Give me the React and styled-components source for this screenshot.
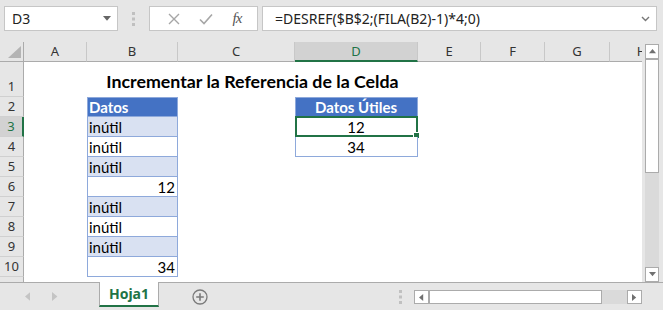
import React from 'react'
import styled, { createGlobalStyle } from 'styled-components'

const GlobalStyle = createGlobalStyle`
  html, body { margin: 0; padding: 0; background: #e6e6e6; }
  * { box-sizing: border-box; }
`

const COLS = [
  { id: 'A', w: 63 },
  { id: 'B', w: 91 },
  { id: 'C', w: 117 },
  { id: 'D', w: 123 },
  { id: 'E', w: 63 },
  { id: 'F', w: 64 },
  { id: 'G', w: 65 },
  { id: 'H', w: 64 },
]
// row 11 is only a sliver at the bottom edge
const ROWS = [35, 20, 20, 20, 20, 20, 20, 20, 20, 20, 20]

const CELLS = [
  { col: 'B', row: 2, kind: 'head', text: 'Datos', align: 'left' },
  { col: 'B', row: 3, kind: 'band', text: 'inútil', align: 'left' },
  { col: 'B', row: 4, kind: 'plain', text: 'inútil', align: 'left' },
  { col: 'B', row: 5, kind: 'band', text: 'inútil', align: 'left' },
  { col: 'B', row: 6, kind: 'plain', text: '12', align: 'right' },
  { col: 'B', row: 7, kind: 'band', text: 'inútil', align: 'left' },
  { col: 'B', row: 8, kind: 'plain', text: 'inútil', align: 'left' },
  { col: 'B', row: 9, kind: 'band', text: 'inútil', align: 'left' },
  { col: 'B', row: 10, kind: 'plain', text: '34', align: 'right' },
  { col: 'D', row: 2, kind: 'head', text: 'Datos Útiles', align: 'center' },
  { col: 'D', row: 3, kind: 'plain', text: '12', align: 'center', selected: true },
  { col: 'D', row: 4, kind: 'plain', text: '34', align: 'center' },
]

const colIndex = (id) => COLS.findIndex((c) => c.id === id) + 2

const Window = styled.div`
  width: 663px;
  height: 310px;
  background: #e6e6e6;
  display: flex;
  flex-direction: column;
  overflow: hidden;
  font-family: 'Noto Sans', 'Open Sans', sans-serif;
`

const FormulaBar = styled.div`
  height: 42px;
  flex-shrink: 0;
  display: flex;
  align-items: flex-start;
  padding: 6px 6px 0 4px;
`

const Box = styled.div`
  height: 25px;
  background: #fff;
  border: 1px solid #c6c6c6;
  display: flex;
  align-items: center;
`

const NameBox = styled(Box)`
  width: 114px;
  justify-content: space-between;
  padding: 0 6px 0 7px;
  font-size: 14px;
  color: #222;
`

const Grip = styled.div`
  width: 31px;
  height: 25px;
  display: flex;
  align-items: center;
  justify-content: center;
`

const FxBox = styled(Box)`
  width: 109px;
  justify-content: space-around;
  padding: 0 6px 0 8px;
`

const FxLabel = styled.span`
  font-family: 'Liberation Serif', serif;
  font-style: italic;
  font-size: 15px;
  color: #555;
  letter-spacing: -1px;
`

const FormulaInput = styled(Box)`
  flex: 1;
  margin-left: 4px;
  justify-content: space-between;
  padding: 0 6px 0 12px;
  font-size: 14px;
  color: #222;
`

const SheetArea = styled.div`
  height: 240px;
  flex-shrink: 0;
  display: flex;
`

const Grid = styled.div`
  width: 642px;
  height: 240px;
  background: #fff;
  display: grid;
  grid-template-columns: 24px ${COLS.map((c) => c.w + 'px').join(' ')};
  grid-template-rows: 20px ${ROWS.map((h) => h + 'px').join(' ')};
  overflow: hidden;
  font-family: Lato, 'Noto Sans', sans-serif;
`

const Corner = styled.div`
  grid-column: 1;
  grid-row: 1;
  background: #e6e6e6;
  border-right: 1px solid #ababab;
  border-bottom: 1px solid #ababab;
  display: flex;
  align-items: flex-end;
  justify-content: flex-end;
  padding: 0 2px 3px 0;
`

const ColHead = styled.div`
  grid-row: 1;
  grid-column: ${(p) => p.$col};
  background: ${(p) => (p.$active ? '#d2d2d2' : '#e6e6e6')};
  border-right: 1px solid #c8c8c8;
  border-bottom: ${(p) => (p.$active ? '2px solid #217346' : '1px solid #ababab')};
  display: flex;
  align-items: center;
  justify-content: center;
  font-family: 'Noto Sans', sans-serif;
  font-size: 13px;
  color: ${(p) => (p.$active ? '#217346' : '#333')};
  padding-bottom: 1px;
`

const RowHead = styled.div`
  grid-column: 1;
  grid-row: ${(p) => p.$row};
  background: ${(p) => (p.$active ? '#d2d2d2' : '#e6e6e6')};
  border-right: ${(p) => (p.$active ? '2px solid #217346' : '1px solid #ababab')};
  border-bottom: 1px solid #d0d0d0;
  display: flex;
  align-items: flex-end;
  justify-content: center;
  padding-bottom: 1px;
  font-family: 'Noto Sans', sans-serif;
  font-size: 13px;
  color: ${(p) => (p.$active ? '#217346' : '#333')};
`

const Title = styled.div`
  grid-row: 2;
  grid-column: 3 / 6;
  display: flex;
  align-items: flex-end;
  justify-content: center;
  padding: 0 0 5px 0;
  font-size: 17.8px;
  font-weight: 700;
  color: #000;
  white-space: nowrap;
`

const KIND_BG = { head: '#4472c4', band: '#d9e1f2', plain: '#ffffff' }

const TableCell = styled.div`
  position: relative;
  grid-column: ${(p) => p.$col};
  grid-row: ${(p) => p.$row};
  background: ${(p) => KIND_BG[p.$kind]};
  border-left: 1px solid #8ea9db;
  border-right: 1px solid #8ea9db;
  border-top: ${(p) => (p.$kind === 'head' ? '1px solid #8ea9db' : 'none')};
  border-bottom: 1px solid #8ea9db;
  display: flex;
  align-items: center;
  justify-content: ${(p) =>
    p.$align === 'right' ? 'flex-end' : p.$align === 'center' ? 'center' : 'flex-start'};
  padding: 0 2px 0 1px;
  font-size: 15px;
  font-weight: ${(p) => (p.$kind === 'head' ? 700 : 400)};
  color: ${(p) => (p.$kind === 'head' ? '#fff' : '#000')};
  white-space: nowrap;
`

const Selection = styled.div`
  position: absolute;
  top: -1px;
  left: -1px;
  right: -1px;
  bottom: -1px;
  border: 2px solid #217346;
  pointer-events: none;
`

const Handle = styled.div`
  position: absolute;
  right: -4px;
  bottom: -4px;
  width: 7px;
  height: 7px;
  background: #217346;
  border: 1px solid #fff;
`

const VScroll = styled.div`
  width: 14px;
  margin: 2px 0 0 3px;
  display: flex;
  flex-direction: column;
  background: #dadada;
`

const ScrollBtn = styled.div`
  width: ${(p) => (p.$horizontal ? '15px' : '14px')};
  height: ${(p) => (p.$horizontal ? '14px' : '15px')};
  flex-shrink: 0;
  background: #fff;
  border: 1px solid #ababab;
  display: flex;
  align-items: center;
  justify-content: center;
`

const Thumb = styled.div`
  background: #fff;
  border: 1px solid #ababab;
  flex-shrink: 0;
  width: ${(p) => p.$w || 'auto'};
  height: ${(p) => p.$h || 'auto'};
`

const Track = styled.div`
  flex: 1;
`

const TabBar = styled.div`
  flex: 1;
  display: flex;
  align-items: stretch;
  border-top: 1px solid #ababab;
`

const NavArrows = styled.div`
  width: 99px;
  display: flex;
  align-items: center;
  gap: 22px;
  padding-left: 25px;
`

const Tab = styled.div`
  width: 60px;
  margin-top: -1px;
  background: #fff;
  border-left: 1px solid #ababab;
  border-right: 1px solid #ababab;
  border-bottom: 2px solid #217346;
  margin-bottom: 3px;
  display: flex;
  align-items: center;
  justify-content: center;
  font-family: 'Noto Sans', sans-serif;
  font-weight: 700;
  font-size: 14px;
  color: #217346;
`

const AddSheet = styled.div`
  width: 84px;
  display: flex;
  align-items: center;
  padding-left: 33px;
`

const TabSpacer = styled.div`
  flex: 1;
  display: flex;
  align-items: center;
  justify-content: flex-end;
  padding-right: 12px;
`

const HScroll = styled.div`
  width: 228px;
  height: 14px;
  margin: 7px 21px 0 0;
  display: flex;
  background: #dadada;
`

const VDots = () => (
  <svg width="3" height="14" viewBox="0 0 3 14">
    <rect x="0" y="0" width="3" height="3" fill="#c0c0c0" />
    <rect x="0" y="5.5" width="3" height="3" fill="#c0c0c0" />
    <rect x="0" y="11" width="3" height="3" fill="#c0c0c0" />
  </svg>
)

const Triangle = ({ dir, size = 7, color = '#707070' }) => {
  const pts = {
    up: `0,${size * 0.6} ${size},${size * 0.6} ${size / 2},0`,
    down: `0,0 ${size},0 ${size / 2},${size * 0.6}`,
    left: `${size * 0.6},0 ${size * 0.6},${size} 0,${size / 2}`,
    right: `0,0 0,${size} ${size * 0.6},${size / 2}`,
  }[dir]
  const vertical = dir === 'up' || dir === 'down'
  return (
    <svg width={vertical ? size : size * 0.6} height={vertical ? size * 0.6 : size}>
      <polygon points={pts} fill={color} />
    </svg>
  )
}

export default function App() {
  return (
    <Window>
      <GlobalStyle />
      <FormulaBar>
        <NameBox>
          <span>D3</span>
          <Triangle dir="down" size={8} color="#666" />
        </NameBox>
        <Grip>
          <VDots />
        </Grip>
        <FxBox>
          <svg width="12" height="12" viewBox="0 0 12 12">
            <path d="M1 1 L11 11 M11 1 L1 11" stroke="#a6a6a6" strokeWidth="1.4" />
          </svg>
          <svg width="14" height="12" viewBox="0 0 14 12">
            <path d="M1 6.5 L5 10.5 L13 1.5" stroke="#a6a6a6" strokeWidth="1.6" fill="none" />
          </svg>
          <FxLabel>fx</FxLabel>
        </FxBox>
        <FormulaInput>
          <span>=DESREF($B$2;(FILA(B2)-1)*4;0)</span>
          <svg width="9" height="6" viewBox="0 0 9 6">
            <path d="M1 1 L4.5 4.5 L8 1" stroke="#777" strokeWidth="1.4" fill="none" />
          </svg>
        </FormulaInput>
      </FormulaBar>

      <SheetArea>
        <Grid>
          <Corner>
            <svg width="13" height="12" viewBox="0 0 13 12">
              <polygon points="13,0 13,12 0,12" fill="#b4b4b4" />
            </svg>
          </Corner>
          {COLS.map((c, i) => (
            <ColHead key={c.id} $col={i + 2} $active={c.id === 'D'}>
              {c.id}
            </ColHead>
          ))}
          {ROWS.map((h, i) => (
            <RowHead key={i} $row={i + 2} $active={i + 1 === 3}>
              {i < 10 ? i + 1 : ''}
            </RowHead>
          ))}
          <Title>Incrementar la Referencia de la Celda</Title>
          {CELLS.map((c) => (
            <TableCell
              key={c.col + c.row}
              $col={colIndex(c.col)}
              $row={c.row + 1}
              $kind={c.kind}
              $align={c.align}
            >
              {c.text}
              {c.selected && (
                <Selection>
                  <Handle />
                </Selection>
              )}
            </TableCell>
          ))}
        </Grid>
        <VScroll>
          <ScrollBtn>
            <Triangle dir="up" />
          </ScrollBtn>
          <Thumb $h="114px" />
          <Track />
          <ScrollBtn>
            <Triangle dir="down" />
          </ScrollBtn>
        </VScroll>
      </SheetArea>

      <TabBar>
        <NavArrows>
          <Triangle dir="left" size={9} color="#c4c4c4" />
          <Triangle dir="right" size={9} color="#c4c4c4" />
        </NavArrows>
        <Tab>Hoja1</Tab>
        <AddSheet>
          <svg width="16" height="16" viewBox="0 0 16 16">
            <circle cx="8" cy="8" r="7" stroke="#7a7a7a" strokeWidth="1.3" fill="none" />
            <path d="M8 4.2 V11.8 M4.2 8 H11.8" stroke="#7a7a7a" strokeWidth="1.6" />
          </svg>
        </AddSheet>
        <TabSpacer>
          <VDots />
        </TabSpacer>
        <HScroll>
          <ScrollBtn $horizontal>
            <Triangle dir="left" />
          </ScrollBtn>
          <Thumb $w="173px" />
          <Track />
          <ScrollBtn $horizontal>
            <Triangle dir="right" />
          </ScrollBtn>
        </HScroll>
      </TabBar>
    </Window>
  )
}
